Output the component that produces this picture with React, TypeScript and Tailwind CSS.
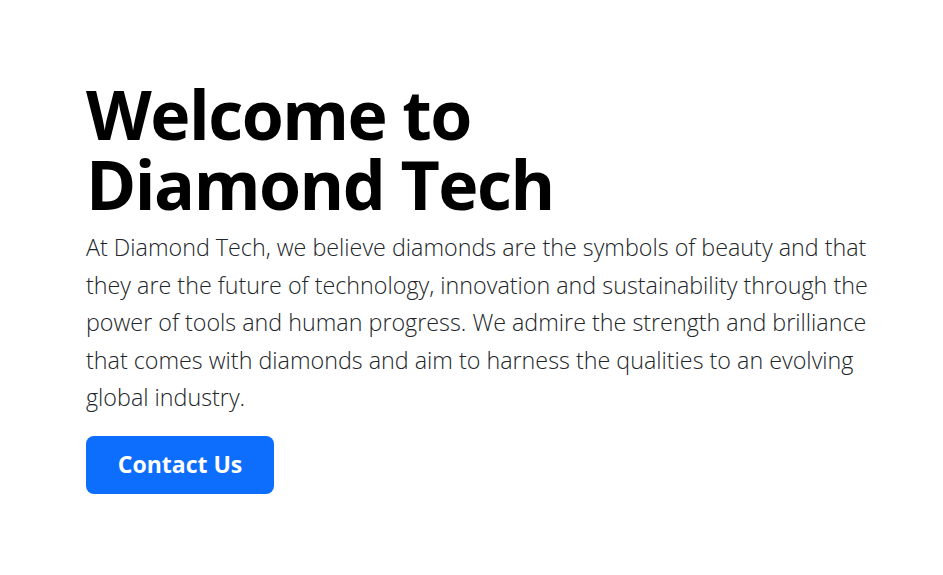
export default function App() {
  return (
    <div className="min-h-screen bg-white font-['Open_Sans',sans-serif]">
      <section className="pl-[86px] pr-[60px] pt-[79px]">
        <div className="max-w-[792px]">
          <h1 className="text-[68px] leading-[70px] font-bold tracking-[-1.5px] text-black">
            Welcome to
            <br />
            Diamond Tech
          </h1>
          <p className="mt-[10px] text-[23.3px] leading-[37.5px] font-light text-[#212529]">
            At Diamond Tech, we believe diamonds are the symbols of beauty and that they are the
            future of technology, innovation and sustainability through the power of tools and
            human progress. We admire the strength and brilliance that comes with diamonds and aim
            to harness the qualities to an evolving global industry.
          </p>
          <button className="mt-[19px] h-[58px] w-[188px] rounded-lg bg-[#0d6efd] text-[23px] font-bold text-white">
            Contact Us
          </button>
        </div>
      </section>
    </div>
  );
}
